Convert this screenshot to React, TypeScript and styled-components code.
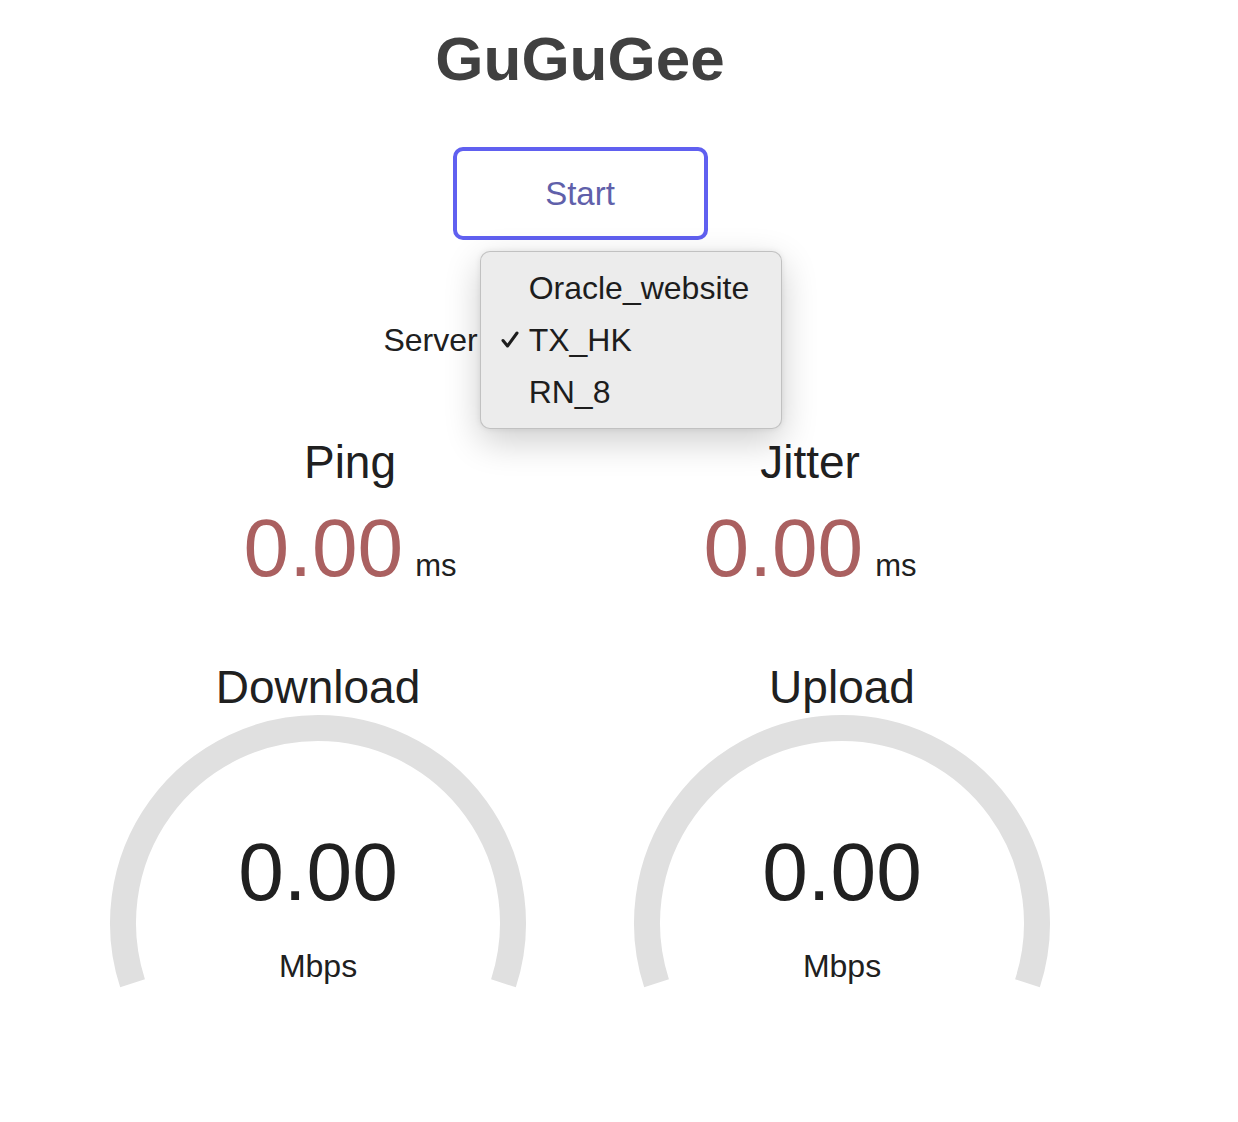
import React, { FC } from 'react';
import styled, { createGlobalStyle } from 'styled-components';

const GlobalStyle = createGlobalStyle`
  html, body {
    margin: 0;
    padding: 0;
    background: #ffffff;
  }

  body {
    color: #202020;
    font-family: 'Liberation Sans', Arial, Helvetica, sans-serif;
  }
`;

const Page = styled.div`
  align-items: center;
  display: flex;
  flex-direction: column;
  text-align: center;
  width: 1160px;
`;

const Title = styled.h1`
  color: #404040;
  font-size: 62px;
  font-weight: bold;
  line-height: 70px;
  margin: 24px 0 0;
`;

const StartButton = styled.div`
  align-items: center;
  border: 4px solid #6060f0;
  border-radius: 10px;
  box-sizing: border-box;
  color: #6060aa;
  cursor: pointer;
  display: flex;
  font-size: 33px;
  height: 93px;
  justify-content: center;
  margin-top: 53px;
  width: 255px;
`;

const PrivacyLink = styled.a`
  color: #202020;
  font-size: 20px;
  line-height: 24px;
  margin-top: 8px;
  text-decoration: none;
`;

const ServerRow = styled.div`
  align-items: center;
  display: flex;
  font-size: 32px;
  height: 40px;
  justify-content: center;
  margin-top: 48px;
`;

const ServerLabel = styled.span`
  line-height: 40px;
`;

const SelectBox = styled.div`
  font-size: 32px;
  height: 40px;
  line-height: 40px;
  margin-left: 7px;
  padding-left: 44px;
  position: relative;
  text-align: left;
  width: 248px;
`;

const Menu = styled.div`
  background: #ececec;
  border: 1px solid rgba(0, 0, 0, 0.18);
  border-radius: 10px;
  box-shadow: 0 12px 36px rgba(0, 0, 0, 0.2), 0 0 6px rgba(0, 0, 0, 0.08);
  box-sizing: border-box;
  left: -5px;
  padding: 10px 0 10px;
  position: absolute;
  top: -69px;
  width: 302px;
  z-index: 10;
`;

const MenuItem = styled.div`
  align-items: center;
  color: #1d1d1d;
  display: flex;
  font-size: 32px;
  height: 52px;
`;

const CheckSlot = styled.span`
  align-items: center;
  display: flex;
  justify-content: center;
  margin-left: 10px;
  width: 38px;
`;

const MetricsRow = styled.div`
  display: flex;
  margin-top: 76px;
`;

const Metric = styled.div<{ $width: number }>`
  align-items: center;
  display: flex;
  flex-direction: column;
  width: ${p => p.$width}px;
`;

const Label = styled.div`
  font-size: 46px;
  line-height: 52px;
`;

const MetricValue = styled.div`
  margin-top: 15px;
  white-space: nowrap;
`;

const BigNumber = styled.span<{ $color: string }>`
  color: ${p => p.$color};
  font-size: 82px;
  line-height: 90px;
`;

const Unit = styled.span`
  font-size: 31px;
  margin-left: 12px;
`;

const GaugeRow = styled.div`
  display: flex;
  margin-top: 68px;
`;

const GaugeStack = styled.div`
  display: grid;
  margin-top: -2px;

  > * {
    grid-area: 1 / 1;
  }
`;

const GaugeText = styled.div`
  align-items: center;
  display: flex;
  flex-direction: column;
  padding-top: 116px;
`;

const GaugeUnit = styled.div`
  font-size: 32px;
  line-height: 38px;
  margin-top: 30px;
`;

const CheckIcon: FC = () => (
  <svg width="20" height="20" viewBox="0 0 20 20">
    <path
      d="M3 10.5 L7.5 16 L17 3"
      fill="none"
      stroke="#1d1d1d"
      strokeWidth="3"
      strokeLinecap="round"
      strokeLinejoin="round"
    />
  </svg>
);

// background arc of a speed gauge: from -1.1π to 0.1π
const Arc: FC = () => {
  const cx = 220;
  const cy = 212;
  const r = 195;
  const a0 = -Math.PI * 1.1;
  const a1 = Math.PI * 0.1;
  const x0 = cx + r * Math.cos(a0);
  const y0 = cy + r * Math.sin(a0);
  const x1 = cx + r * Math.cos(a1);
  const y1 = cy + r * Math.sin(a1);
  return (
    <svg width="440" height="290" viewBox="0 0 440 290">
      <path
        d={`M ${x0} ${y0} A ${r} ${r} 0 1 1 ${x1} ${y1}`}
        fill="none"
        stroke="#e0e0e0"
        strokeWidth="26"
      />
    </svg>
  );
};

const Gauge: FC<{ title: string }> = ({ title }) => (
  <Metric $width={524}>
    <Label>{title}</Label>
    <GaugeStack>
      <Arc />
      <GaugeText>
        <BigNumber $color="#202020">0.00</BigNumber>
        <GaugeUnit>Mbps</GaugeUnit>
      </GaugeText>
    </GaugeStack>
  </Metric>
);

const servers = ['Oracle_website', 'TX_HK', 'RN_8'];

const App: FC = () => (
  <>
    <GlobalStyle />
    <Page>
      <Title>GuGuGee</Title>
      <StartButton>Start</StartButton>
      <PrivacyLink href="#">Privacy</PrivacyLink>
      <ServerRow>
        <ServerLabel>Server</ServerLabel>
        <SelectBox>
          TX_HK
          <Menu>
            {servers.map(name => (
              <MenuItem key={name}>
                <CheckSlot>{name === 'TX_HK' && <CheckIcon />}</CheckSlot>
                {name}
              </MenuItem>
            ))}
          </Menu>
        </SelectBox>
      </ServerRow>
      <MetricsRow>
        <Metric $width={460}>
          <Label>Ping</Label>
          <MetricValue>
            <BigNumber $color="#aa6060">0.00</BigNumber>
            <Unit>ms</Unit>
          </MetricValue>
        </Metric>
        <Metric $width={460}>
          <Label>Jitter</Label>
          <MetricValue>
            <BigNumber $color="#aa6060">0.00</BigNumber>
            <Unit>ms</Unit>
          </MetricValue>
        </Metric>
      </MetricsRow>
      <GaugeRow>
        <Gauge title="Download" />
        <Gauge title="Upload" />
      </GaugeRow>
    </Page>
  </>
);

export default App;
